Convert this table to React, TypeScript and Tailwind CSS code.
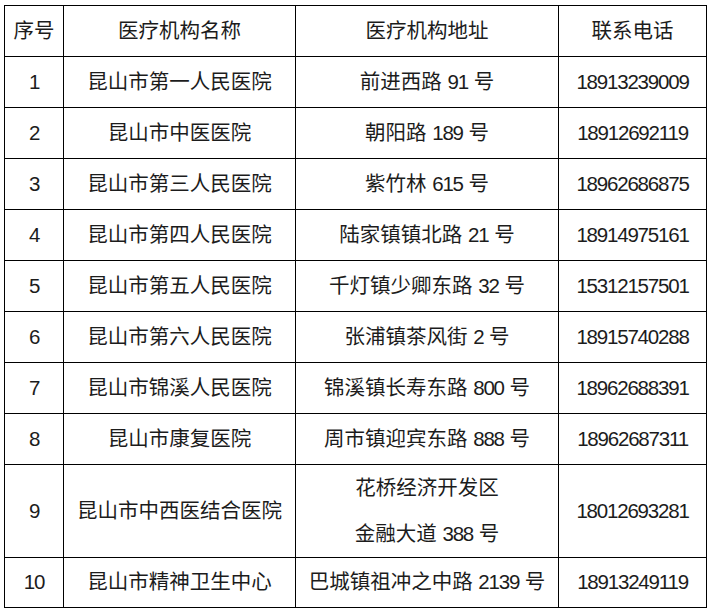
const rows: { no: string; name: string; addr: string[]; tel: string }[] = [
  { no: '1', name: '昆山市第一人民医院', addr: ['前进西路 91 号'], tel: '18913239009' },
  { no: '2', name: '昆山市中医医院', addr: ['朝阳路 189 号'], tel: '18912692119' },
  { no: '3', name: '昆山市第三人民医院', addr: ['紫竹林 615 号'], tel: '18962686875' },
  { no: '4', name: '昆山市第四人民医院', addr: ['陆家镇镇北路 21 号'], tel: '18914975161' },
  { no: '5', name: '昆山市第五人民医院', addr: ['千灯镇少卿东路 32 号'], tel: '15312157501' },
  { no: '6', name: '昆山市第六人民医院', addr: ['张浦镇茶风街 2 号'], tel: '18915740288' },
  { no: '7', name: '昆山市锦溪人民医院', addr: ['锦溪镇长寿东路 800 号'], tel: '18962688391' },
  { no: '8', name: '昆山市康复医院', addr: ['周市镇迎宾东路 888 号'], tel: '18962687311' },
  { no: '9', name: '昆山市中西医结合医院', addr: ['花桥经济开发区', '金融大道 388 号'], tel: '18012693281' },
  { no: '10', name: '昆山市精神卫生中心', addr: ['巴城镇祖冲之中路 2139 号'], tel: '18913249119' },
]

// digits in the source are narrow, tighten them a bit
function Txt({ text }: { text: string }) {
  const parts = text.split(/(\d+)/)
  return (
    <>
      {parts.map((p, i) =>
        /^\d+$/.test(p) ? (
          <span key={i} className="tracking-[-1.2px]">{p}</span>
        ) : (
          <span key={i}>{p}</span>
        )
      )}
    </>
  )
}

const cell = 'border border-black text-center align-middle p-0'

export default function App() {
  return (
    <div
      className="w-[712px] h-[614px] bg-white pl-[4px] pt-[5px] text-[#1c1c1c] text-[20.5px]"
      style={{ fontFamily: '"Liberation Sans", "Noto Sans CJK SC", sans-serif' }}
    >
      <table className="w-[702px] table-fixed border-collapse">
        <colgroup>
          <col className="w-[59px]" />
          <col className="w-[232px]" />
          <col className="w-[263px]" />
          <col className="w-[148px]" />
        </colgroup>
        <thead>
          <tr className="h-[51px]">
            <th className={cell + ' font-normal'}>序号</th>
            <th className={cell + ' font-normal'}>医疗机构名称</th>
            <th className={cell + ' font-normal'}>医疗机构地址</th>
            <th className={cell + ' font-normal'}>联系电话</th>
          </tr>
        </thead>
        <tbody>
          {rows.map((r) => (
            <tr key={r.no} className={r.addr.length > 1 ? 'h-[93px]' : r.no === '10' ? 'h-[50px]' : 'h-[51px]'}>
              <td className={cell}><Txt text={r.no} /></td>
              <td className={cell}>{r.name}</td>
              <td className={cell}>
                <div className={r.addr.length > 1 ? 'flex flex-col leading-[46px]' : ''}>
                  {r.addr.map((a) => (
                    <div key={a}><Txt text={a} /></div>
                  ))}
                </div>
              </td>
              <td className={cell}><Txt text={r.tel} /></td>
            </tr>
          ))}
        </tbody>
      </table>
    </div>
  )
}
